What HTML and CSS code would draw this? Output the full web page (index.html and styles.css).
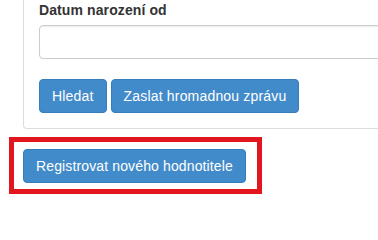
FILE: index.html
```html
<!DOCTYPE html>
<html lang="cs">
<head>
<meta charset="utf-8">
<link rel="stylesheet" href="styles.css">
</head>
<body>
<div class="page">
  <div class="panel">
    <div class="form-group">
      <label class="label">Datum narození od</label>
      <input class="input" type="text">
    </div>
    <div class="actions">
      <button class="btn">Hledat</button>
      <button class="btn">Zaslat hromadnou zprávu</button>
    </div>
  </div>
  <div class="highlight">
    <button class="btn">Registrovat nového hodnotitele</button>
  </div>
</div>
</body>
</html>
```
FILE: styles.css
```css
html, body {
  margin: 0;
  padding: 0;
  background: #fff;
  font-family: "Liberation Sans", Arial, sans-serif;
  font-size: 14px;
  line-height: 20px;
  color: #333;
  overflow: hidden;
}
.page {
  width: 420px;
}
.panel {
  margin-left: 23px;
  border: 1px solid #ddd;
  border-top: none;
  border-radius: 0 0 4px 4px;
  padding: 0 15px 15px 15px;
}
.form-group {
  display: flex;
  flex-direction: column;
  margin-bottom: 20px;
}
.label {
  display: block;
  font-weight: bold;
  margin-bottom: 5px;
  letter-spacing: 0.1px;
}
.input {
  box-sizing: border-box;
  height: 34px;
  width: 100%;
  border: 1px solid #ccc;
  border-radius: 4px;
  box-shadow: inset 0 1px 1px rgba(0,0,0,0.075);
  padding: 6px 12px;
  font: inherit;
  margin: 0;
}
.actions {
  display: flex;
  gap: 4px;
}
.btn {
  box-sizing: border-box;
  height: 34px;
  padding: 6px 12px;
  margin: 0;
  font-family: "Liberation Sans", Arial, sans-serif;
  font-size: 14px;
  line-height: 20px;
  letter-spacing: 0.18px;
  color: #fff;
  background: #428bca;
  border: 1px solid #357ebd;
  border-radius: 4px;
  white-space: nowrap;
}
.highlight {
  display: inline-block;
  margin-top: 8px;
  margin-left: 9px;
  border: 5px solid #e2161f;
  padding: 7px 11px 6px 9px;
}
.highlight .btn {
  display: block;
  letter-spacing: 0.13px;
}
```
